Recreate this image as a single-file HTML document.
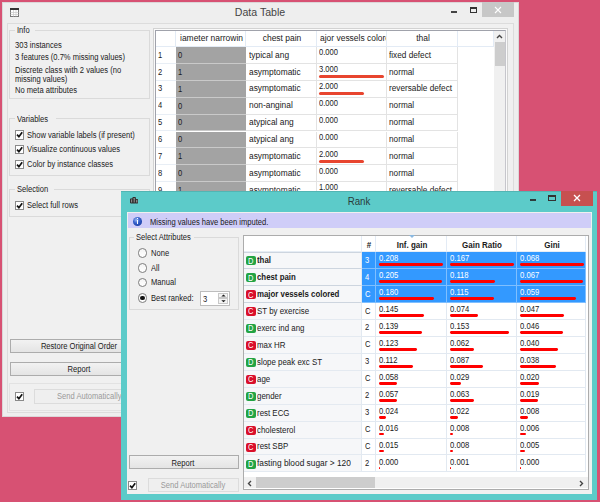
<!DOCTYPE html>
<html><head><meta charset="utf-8"><style>
html,body{margin:0;padding:0;}
body{width:600px;height:502px;overflow:hidden;position:relative;background:#d75173;font-family:"Liberation Sans", sans-serif;font-size:8px;color:#1a1a1a;}
div{position:absolute;box-sizing:border-box;}
.t{white-space:nowrap;}
.gb{border:1px solid #dadada;}
.gl{background:#f0f0f0;height:6px;}
.btn{border:1px solid #acacac;background:linear-gradient(#f2f2f2,#e4e4e4);}
.cb{width:9.2px;height:9.4px;border:1px solid #8a8a8a;background:#fff;}
.cb svg{position:absolute;left:0;top:0;}
.rad{width:9.5px;height:9.5px;border:1px solid #7d7d7d;border-radius:50%;background:linear-gradient(#f4f4f4,#fff);}
.ic{width:9.5px;height:9px;border-radius:2px;}
.D{background:#23a344;}
.C{background:#d9102b;}
</style></head><body>

<div style="left:2px;top:2px;width:517px;height:415px;background:#eeeeee;border:1px solid #dcd6d8;"></div>
<svg style="position:absolute;left:10px;top:8px" width="9" height="9" viewBox="0 0 9 9"><rect x="0.5" y="0.5" width="8" height="8" fill="#fff" stroke="#777" stroke-width="1"/><rect x="0" y="0" width="9" height="2" fill="#333"/><path d="M3.5 2 V8.5 M6 2 V8.5 M0.5 4.5 H8.5 M0.5 6.5 H8.5" stroke="#c8c8c8" stroke-width="0.7"/></svg>
<div class="t" style="left:110.30px;width:300px;text-align:center;top:7.64px;font-size:10.4px;line-height:10.4px;font-weight:normal;color:#444;transform:scaleX(1.0200);transform-origin:50% 0;">Data Table</div>
<div style="left:451px;top:11.3px;width:6px;height:1.6px;background:#444;"></div>
<div style="left:470px;top:7px;width:7px;height:6px;border:1px solid #333;border-top-width:2px;"></div>
<div style="left:482px;top:2px;width:32px;height:15px;background:#c7c7c7;"></div>
<svg style="position:absolute;left:494px;top:6px" width="8" height="8" viewBox="0 0 8 8"><path d="M1 1 L7 7 M7 1 L1 7" stroke="#fff" stroke-width="1.1"/></svg>
<div style="left:7px;top:23px;width:507px;height:390px;background:#f0f0f0;border:1px solid #dcdcdc;"></div>
<div class="gb" style="left:9px;top:29.6px;width:141px;height:69.4px;"></div>
<div class="gl" style="left:15px;top:27.6px;width:20px;"></div>
<div class="t" style="left:17.00px;top:26.34px;font-size:8.9px;line-height:8.9px;font-weight:normal;color:#1a1a1a;transform:scaleX(0.8539);transform-origin:0 0;">Info</div>
<div class="t" style="left:14.80px;top:41.34px;font-size:8.9px;line-height:8.9px;font-weight:normal;color:#1a1a1a;transform:scaleX(0.8539);transform-origin:0 0;">303 instances</div>
<div class="t" style="left:14.80px;top:52.84px;font-size:8.9px;line-height:8.9px;font-weight:normal;color:#1a1a1a;transform:scaleX(0.8539);transform-origin:0 0;">3 features (0.7% missing values)</div>
<div class="t" style="left:14.80px;top:65.84px;font-size:8.9px;line-height:8.9px;font-weight:normal;color:#1a1a1a;transform:scaleX(0.8539);transform-origin:0 0;">Discrete class with 2 values (no</div>
<div class="t" style="left:14.80px;top:74.74px;font-size:8.9px;line-height:8.9px;font-weight:normal;color:#1a1a1a;transform:scaleX(0.8539);transform-origin:0 0;">missing values)</div>
<div class="t" style="left:14.80px;top:86.44px;font-size:8.9px;line-height:8.9px;font-weight:normal;color:#1a1a1a;transform:scaleX(0.8539);transform-origin:0 0;">No meta attributes</div>
<div class="gb" style="left:9px;top:118px;width:141px;height:57.5px;"></div>
<div class="gl" style="left:15px;top:116px;width:41px;"></div>
<div class="t" style="left:17.00px;top:114.84px;font-size:8.9px;line-height:8.9px;font-weight:normal;color:#1a1a1a;transform:scaleX(0.8539);transform-origin:0 0;">Variables</div>
<div class="cb" style="left:15px;top:130.2px;"><svg width="7" height="7" viewBox="0 0 7 7"><path d="M1 3.7 L2.9 5.7 L6.2 1.3" stroke="#111" stroke-width="1.7" fill="none"/></svg></div>
<div class="t" style="left:26.70px;top:130.54px;font-size:8.9px;line-height:8.9px;font-weight:normal;color:#1a1a1a;transform:scaleX(0.8539);transform-origin:0 0;">Show variable labels (if present)</div>
<div class="cb" style="left:15px;top:145.1px;"><svg width="7" height="7" viewBox="0 0 7 7"><path d="M1 3.7 L2.9 5.7 L6.2 1.3" stroke="#111" stroke-width="1.7" fill="none"/></svg></div>
<div class="t" style="left:26.70px;top:145.44px;font-size:8.9px;line-height:8.9px;font-weight:normal;color:#1a1a1a;transform:scaleX(0.8539);transform-origin:0 0;">Visualize continuous values</div>
<div class="cb" style="left:15px;top:160.0px;"><svg width="7" height="7" viewBox="0 0 7 7"><path d="M1 3.7 L2.9 5.7 L6.2 1.3" stroke="#111" stroke-width="1.7" fill="none"/></svg></div>
<div class="t" style="left:26.70px;top:160.34px;font-size:8.9px;line-height:8.9px;font-weight:normal;color:#1a1a1a;transform:scaleX(0.8539);transform-origin:0 0;">Color by instance classes</div>
<div class="gb" style="left:9px;top:189px;width:141px;height:27.5px;"></div>
<div class="gl" style="left:15px;top:187px;width:39px;"></div>
<div class="t" style="left:17.00px;top:185.34px;font-size:8.9px;line-height:8.9px;font-weight:normal;color:#1a1a1a;transform:scaleX(0.8539);transform-origin:0 0;">Selection</div>
<div class="cb" style="left:15px;top:200.5px;"><svg width="7" height="7" viewBox="0 0 7 7"><path d="M1 3.7 L2.9 5.7 L6.2 1.3" stroke="#111" stroke-width="1.7" fill="none"/></svg></div>
<div class="t" style="left:26.70px;top:200.84px;font-size:8.9px;line-height:8.9px;font-weight:normal;color:#1a1a1a;transform:scaleX(0.8539);transform-origin:0 0;">Select full rows</div>
<div class="btn" style="left:10px;top:339px;width:139px;height:14px;"></div>
<div class="t" style="left:-71.30px;width:300px;text-align:center;top:341.84px;font-size:8.9px;line-height:8.9px;font-weight:normal;color:#1a1a1a;transform:scaleX(0.8539);transform-origin:50% 0;">Restore Original Order</div>
<div class="btn" style="left:10px;top:362px;width:139px;height:14px;"></div>
<div class="t" style="left:-71.30px;width:300px;text-align:center;top:364.84px;font-size:8.9px;line-height:8.9px;font-weight:normal;color:#1a1a1a;transform:scaleX(0.8539);transform-origin:50% 0;">Report</div>
<div class="gb" style="left:9px;top:383px;width:141px;height:27.5px;border-color:#e2e2e2;"></div>
<div class="cb" style="left:15px;top:392px;"><svg width="7" height="7" viewBox="0 0 7 7"><path d="M1 3.7 L2.9 5.7 L6.2 1.3" stroke="#111" stroke-width="1.7" fill="none"/></svg></div>
<div style="left:34px;top:389px;width:114px;height:14.5px;border:1px solid #dcdcdc;background:#efefef;"></div>
<div class="t" style="left:56.60px;top:392.34px;font-size:8.9px;line-height:8.9px;font-weight:normal;color:#9a9a9a;transform:scaleX(0.8539);transform-origin:0 0;">Send Automatically</div>
<div style="left:153px;top:28px;width:355px;height:170px;background:#fafafa;border:1px solid #d2d2d2;"></div>
<div style="left:155px;top:30px;width:351px;height:170px;background:#fff;border:1px solid #a0a2ab;border-right-color:#c6c6cc;"></div>
<div style="left:156px;top:31px;width:20px;height:16px;border-right:1px solid #e3ebf5;border-bottom:1px solid #e3ebf5;overflow:hidden;"></div>
<div style="left:176px;top:31px;width:70px;height:16px;border-right:1px solid #e3ebf5;border-bottom:1px solid #e3ebf5;overflow:hidden;"><div class="t" style="left:3.60px;top:3.44px;font-size:8.9px;line-height:8.9px;font-weight:normal;color:#1a1a1a;transform:scaleX(0.9528);transform-origin:0 0;">iameter narrowin</div></div>
<div style="left:246px;top:31px;width:71px;height:16px;border-right:1px solid #e3ebf5;border-bottom:1px solid #e3ebf5;overflow:hidden;"><div class="t" style="left:-114.50px;width:300px;text-align:center;top:3.44px;font-size:8.9px;line-height:8.9px;font-weight:normal;color:#1a1a1a;transform:scaleX(0.9528);transform-origin:50% 0;">chest pain</div></div>
<div style="left:317px;top:31px;width:70px;height:16px;border-right:1px solid #e3ebf5;border-bottom:1px solid #e3ebf5;overflow:hidden;"><div class="t" style="left:2.80px;top:3.44px;font-size:8.9px;line-height:8.9px;font-weight:normal;color:#1a1a1a;transform:scaleX(0.9528);transform-origin:0 0;">ajor vessels colore</div></div>
<div style="left:387px;top:31px;width:71px;height:16px;border-right:1px solid #e3ebf5;border-bottom:1px solid #e3ebf5;overflow:hidden;"><div class="t" style="left:-114.50px;width:300px;text-align:center;top:3.44px;font-size:8.9px;line-height:8.9px;font-weight:normal;color:#1a1a1a;transform:scaleX(0.9528);transform-origin:50% 0;">thal</div></div>
<div style="left:458px;top:31px;width:36px;height:16px;border-right:1px solid #e3ebf5;border-bottom:1px solid #e3ebf5;overflow:hidden;"></div>
<div style="left:156px;top:47.0px;width:20px;height:16.9px;border-bottom:1px solid #e8eef5;"></div>
<div class="t" style="left:158.40px;top:50.64px;font-size:8.9px;line-height:8.9px;font-weight:normal;color:#1a1a1a;transform:scaleX(0.8539);transform-origin:0 0;">1</div>
<div style="left:176px;top:47.0px;width:70px;height:16.9px;background:#a3a3a3;border-bottom:1px solid #c9c9c9;"></div>
<div class="t" style="left:178.20px;top:50.84px;font-size:8.9px;line-height:8.9px;font-weight:normal;color:#1a1a1a;transform:scaleX(0.8539);transform-origin:0 0;">0</div>
<div style="left:246px;top:47.0px;width:71px;height:16.9px;border-right:1px solid #e3e3e3;border-bottom:1px solid #e3e3e3;"></div>
<div class="t" style="left:248.60px;top:50.64px;font-size:8.9px;line-height:8.9px;font-weight:normal;color:#1a1a1a;transform:scaleX(0.9438);transform-origin:0 0;">typical ang</div>
<div style="left:317px;top:47.0px;width:70px;height:16.9px;border-right:1px solid #e3e3e3;border-bottom:1px solid #e3e3e3;"></div>
<div class="t" style="left:319.00px;top:48.24px;font-size:8.9px;line-height:8.9px;font-weight:normal;color:#1a1a1a;transform:scaleX(0.8539);transform-origin:0 0;">0.000</div>
<div style="left:387px;top:47.0px;width:71px;height:16.9px;border-right:1px solid #e3e3e3;border-bottom:1px solid #e3e3e3;"></div>
<div class="t" style="left:389.40px;top:50.64px;font-size:8.9px;line-height:8.9px;font-weight:normal;color:#1a1a1a;transform:scaleX(0.9258);transform-origin:0 0;">fixed defect</div>
<div style="left:156px;top:63.9px;width:20px;height:16.9px;border-bottom:1px solid #e8eef5;"></div>
<div class="t" style="left:158.40px;top:67.54px;font-size:8.9px;line-height:8.9px;font-weight:normal;color:#1a1a1a;transform:scaleX(0.8539);transform-origin:0 0;">2</div>
<div style="left:176px;top:63.9px;width:70px;height:16.9px;background:#a3a3a3;border-bottom:1px solid #c9c9c9;"></div>
<div class="t" style="left:178.20px;top:67.74px;font-size:8.9px;line-height:8.9px;font-weight:normal;color:#1a1a1a;transform:scaleX(0.8539);transform-origin:0 0;">1</div>
<div style="left:246px;top:63.9px;width:71px;height:16.9px;border-right:1px solid #e3e3e3;border-bottom:1px solid #e3e3e3;"></div>
<div class="t" style="left:248.60px;top:67.54px;font-size:8.9px;line-height:8.9px;font-weight:normal;color:#1a1a1a;transform:scaleX(0.9438);transform-origin:0 0;">asymptomatic</div>
<div style="left:317px;top:63.9px;width:70px;height:16.9px;border-right:1px solid #e3e3e3;border-bottom:1px solid #e3e3e3;"></div>
<div class="t" style="left:319.00px;top:65.14px;font-size:8.9px;line-height:8.9px;font-weight:normal;color:#1a1a1a;transform:scaleX(0.8539);transform-origin:0 0;">3.000</div>
<div style="left:319px;top:75.0px;width:65.30000000000001px;height:3px;border-radius:1.5px;background:#e8452f;"></div>
<div style="left:387px;top:63.9px;width:71px;height:16.9px;border-right:1px solid #e3e3e3;border-bottom:1px solid #e3e3e3;"></div>
<div class="t" style="left:389.40px;top:67.54px;font-size:8.9px;line-height:8.9px;font-weight:normal;color:#1a1a1a;transform:scaleX(0.9258);transform-origin:0 0;">normal</div>
<div style="left:156px;top:80.8px;width:20px;height:16.9px;border-bottom:1px solid #e8eef5;"></div>
<div class="t" style="left:158.40px;top:84.44px;font-size:8.9px;line-height:8.9px;font-weight:normal;color:#1a1a1a;transform:scaleX(0.8539);transform-origin:0 0;">3</div>
<div style="left:176px;top:80.8px;width:70px;height:16.9px;background:#a3a3a3;border-bottom:1px solid #c9c9c9;"></div>
<div class="t" style="left:178.20px;top:84.64px;font-size:8.9px;line-height:8.9px;font-weight:normal;color:#1a1a1a;transform:scaleX(0.8539);transform-origin:0 0;">1</div>
<div style="left:246px;top:80.8px;width:71px;height:16.9px;border-right:1px solid #e3e3e3;border-bottom:1px solid #e3e3e3;"></div>
<div class="t" style="left:248.60px;top:84.44px;font-size:8.9px;line-height:8.9px;font-weight:normal;color:#1a1a1a;transform:scaleX(0.9438);transform-origin:0 0;">asymptomatic</div>
<div style="left:317px;top:80.8px;width:70px;height:16.9px;border-right:1px solid #e3e3e3;border-bottom:1px solid #e3e3e3;"></div>
<div class="t" style="left:319.00px;top:82.04px;font-size:8.9px;line-height:8.9px;font-weight:normal;color:#1a1a1a;transform:scaleX(0.8539);transform-origin:0 0;">2.000</div>
<div style="left:319px;top:91.89999999999999px;width:44.7px;height:3px;border-radius:1.5px;background:#e8452f;"></div>
<div style="left:387px;top:80.8px;width:71px;height:16.9px;border-right:1px solid #e3e3e3;border-bottom:1px solid #e3e3e3;"></div>
<div class="t" style="left:389.40px;top:84.44px;font-size:8.9px;line-height:8.9px;font-weight:normal;color:#1a1a1a;transform:scaleX(0.9258);transform-origin:0 0;">reversable defect</div>
<div style="left:156px;top:97.69999999999999px;width:20px;height:16.9px;border-bottom:1px solid #e8eef5;"></div>
<div class="t" style="left:158.40px;top:101.34px;font-size:8.9px;line-height:8.9px;font-weight:normal;color:#1a1a1a;transform:scaleX(0.8539);transform-origin:0 0;">4</div>
<div style="left:176px;top:97.69999999999999px;width:70px;height:16.9px;background:#a3a3a3;border-bottom:1px solid #c9c9c9;"></div>
<div class="t" style="left:178.20px;top:101.54px;font-size:8.9px;line-height:8.9px;font-weight:normal;color:#1a1a1a;transform:scaleX(0.8539);transform-origin:0 0;">0</div>
<div style="left:246px;top:97.69999999999999px;width:71px;height:16.9px;border-right:1px solid #e3e3e3;border-bottom:1px solid #e3e3e3;"></div>
<div class="t" style="left:248.60px;top:101.34px;font-size:8.9px;line-height:8.9px;font-weight:normal;color:#1a1a1a;transform:scaleX(0.9438);transform-origin:0 0;">non-anginal</div>
<div style="left:317px;top:97.69999999999999px;width:70px;height:16.9px;border-right:1px solid #e3e3e3;border-bottom:1px solid #e3e3e3;"></div>
<div class="t" style="left:319.00px;top:98.94px;font-size:8.9px;line-height:8.9px;font-weight:normal;color:#1a1a1a;transform:scaleX(0.8539);transform-origin:0 0;">0.000</div>
<div style="left:387px;top:97.69999999999999px;width:71px;height:16.9px;border-right:1px solid #e3e3e3;border-bottom:1px solid #e3e3e3;"></div>
<div class="t" style="left:389.40px;top:101.34px;font-size:8.9px;line-height:8.9px;font-weight:normal;color:#1a1a1a;transform:scaleX(0.9258);transform-origin:0 0;">normal</div>
<div style="left:156px;top:114.6px;width:20px;height:16.9px;border-bottom:1px solid #e8eef5;"></div>
<div class="t" style="left:158.40px;top:118.24px;font-size:8.9px;line-height:8.9px;font-weight:normal;color:#1a1a1a;transform:scaleX(0.8539);transform-origin:0 0;">5</div>
<div style="left:176px;top:114.6px;width:70px;height:16.9px;background:#a3a3a3;border-bottom:1px solid #c9c9c9;"></div>
<div class="t" style="left:178.20px;top:118.44px;font-size:8.9px;line-height:8.9px;font-weight:normal;color:#1a1a1a;transform:scaleX(0.8539);transform-origin:0 0;">0</div>
<div style="left:246px;top:114.6px;width:71px;height:16.9px;border-right:1px solid #e3e3e3;border-bottom:1px solid #e3e3e3;"></div>
<div class="t" style="left:248.60px;top:118.24px;font-size:8.9px;line-height:8.9px;font-weight:normal;color:#1a1a1a;transform:scaleX(0.9438);transform-origin:0 0;">atypical ang</div>
<div style="left:317px;top:114.6px;width:70px;height:16.9px;border-right:1px solid #e3e3e3;border-bottom:1px solid #e3e3e3;"></div>
<div class="t" style="left:319.00px;top:115.84px;font-size:8.9px;line-height:8.9px;font-weight:normal;color:#1a1a1a;transform:scaleX(0.8539);transform-origin:0 0;">0.000</div>
<div style="left:387px;top:114.6px;width:71px;height:16.9px;border-right:1px solid #e3e3e3;border-bottom:1px solid #e3e3e3;"></div>
<div class="t" style="left:389.40px;top:118.24px;font-size:8.9px;line-height:8.9px;font-weight:normal;color:#1a1a1a;transform:scaleX(0.9258);transform-origin:0 0;">normal</div>
<div style="left:156px;top:131.5px;width:20px;height:16.9px;border-bottom:1px solid #e8eef5;"></div>
<div class="t" style="left:158.40px;top:135.14px;font-size:8.9px;line-height:8.9px;font-weight:normal;color:#1a1a1a;transform:scaleX(0.8539);transform-origin:0 0;">6</div>
<div style="left:176px;top:131.5px;width:70px;height:16.9px;background:#a3a3a3;border-bottom:1px solid #c9c9c9;"></div>
<div class="t" style="left:178.20px;top:135.34px;font-size:8.9px;line-height:8.9px;font-weight:normal;color:#1a1a1a;transform:scaleX(0.8539);transform-origin:0 0;">0</div>
<div style="left:246px;top:131.5px;width:71px;height:16.9px;border-right:1px solid #e3e3e3;border-bottom:1px solid #e3e3e3;"></div>
<div class="t" style="left:248.60px;top:135.14px;font-size:8.9px;line-height:8.9px;font-weight:normal;color:#1a1a1a;transform:scaleX(0.9438);transform-origin:0 0;">atypical ang</div>
<div style="left:317px;top:131.5px;width:70px;height:16.9px;border-right:1px solid #e3e3e3;border-bottom:1px solid #e3e3e3;"></div>
<div class="t" style="left:319.00px;top:132.74px;font-size:8.9px;line-height:8.9px;font-weight:normal;color:#1a1a1a;transform:scaleX(0.8539);transform-origin:0 0;">0.000</div>
<div style="left:387px;top:131.5px;width:71px;height:16.9px;border-right:1px solid #e3e3e3;border-bottom:1px solid #e3e3e3;"></div>
<div class="t" style="left:389.40px;top:135.14px;font-size:8.9px;line-height:8.9px;font-weight:normal;color:#1a1a1a;transform:scaleX(0.9258);transform-origin:0 0;">normal</div>
<div style="left:156px;top:148.39999999999998px;width:20px;height:16.9px;border-bottom:1px solid #e8eef5;"></div>
<div class="t" style="left:158.40px;top:152.04px;font-size:8.9px;line-height:8.9px;font-weight:normal;color:#1a1a1a;transform:scaleX(0.8539);transform-origin:0 0;">7</div>
<div style="left:176px;top:148.39999999999998px;width:70px;height:16.9px;background:#a3a3a3;border-bottom:1px solid #c9c9c9;"></div>
<div class="t" style="left:178.20px;top:152.24px;font-size:8.9px;line-height:8.9px;font-weight:normal;color:#1a1a1a;transform:scaleX(0.8539);transform-origin:0 0;">1</div>
<div style="left:246px;top:148.39999999999998px;width:71px;height:16.9px;border-right:1px solid #e3e3e3;border-bottom:1px solid #e3e3e3;"></div>
<div class="t" style="left:248.60px;top:152.04px;font-size:8.9px;line-height:8.9px;font-weight:normal;color:#1a1a1a;transform:scaleX(0.9438);transform-origin:0 0;">asymptomatic</div>
<div style="left:317px;top:148.39999999999998px;width:70px;height:16.9px;border-right:1px solid #e3e3e3;border-bottom:1px solid #e3e3e3;"></div>
<div class="t" style="left:319.00px;top:149.64px;font-size:8.9px;line-height:8.9px;font-weight:normal;color:#1a1a1a;transform:scaleX(0.8539);transform-origin:0 0;">2.000</div>
<div style="left:319px;top:159.49999999999997px;width:44.7px;height:3px;border-radius:1.5px;background:#e8452f;"></div>
<div style="left:387px;top:148.39999999999998px;width:71px;height:16.9px;border-right:1px solid #e3e3e3;border-bottom:1px solid #e3e3e3;"></div>
<div class="t" style="left:389.40px;top:152.04px;font-size:8.9px;line-height:8.9px;font-weight:normal;color:#1a1a1a;transform:scaleX(0.9258);transform-origin:0 0;">normal</div>
<div style="left:156px;top:165.29999999999998px;width:20px;height:16.9px;border-bottom:1px solid #e8eef5;"></div>
<div class="t" style="left:158.40px;top:168.94px;font-size:8.9px;line-height:8.9px;font-weight:normal;color:#1a1a1a;transform:scaleX(0.8539);transform-origin:0 0;">8</div>
<div style="left:176px;top:165.29999999999998px;width:70px;height:16.9px;background:#a3a3a3;border-bottom:1px solid #c9c9c9;"></div>
<div class="t" style="left:178.20px;top:169.14px;font-size:8.9px;line-height:8.9px;font-weight:normal;color:#1a1a1a;transform:scaleX(0.8539);transform-origin:0 0;">0</div>
<div style="left:246px;top:165.29999999999998px;width:71px;height:16.9px;border-right:1px solid #e3e3e3;border-bottom:1px solid #e3e3e3;"></div>
<div class="t" style="left:248.60px;top:168.94px;font-size:8.9px;line-height:8.9px;font-weight:normal;color:#1a1a1a;transform:scaleX(0.9438);transform-origin:0 0;">asymptomatic</div>
<div style="left:317px;top:165.29999999999998px;width:70px;height:16.9px;border-right:1px solid #e3e3e3;border-bottom:1px solid #e3e3e3;"></div>
<div class="t" style="left:319.00px;top:166.54px;font-size:8.9px;line-height:8.9px;font-weight:normal;color:#1a1a1a;transform:scaleX(0.8539);transform-origin:0 0;">0.000</div>
<div style="left:387px;top:165.29999999999998px;width:71px;height:16.9px;border-right:1px solid #e3e3e3;border-bottom:1px solid #e3e3e3;"></div>
<div class="t" style="left:389.40px;top:168.94px;font-size:8.9px;line-height:8.9px;font-weight:normal;color:#1a1a1a;transform:scaleX(0.9258);transform-origin:0 0;">normal</div>
<div style="left:156px;top:182.2px;width:20px;height:16.9px;border-bottom:1px solid #e8eef5;"></div>
<div class="t" style="left:158.40px;top:185.84px;font-size:8.9px;line-height:8.9px;font-weight:normal;color:#1a1a1a;transform:scaleX(0.8539);transform-origin:0 0;">9</div>
<div style="left:176px;top:182.2px;width:70px;height:16.9px;background:#a3a3a3;border-bottom:1px solid #c9c9c9;"></div>
<div class="t" style="left:178.20px;top:186.04px;font-size:8.9px;line-height:8.9px;font-weight:normal;color:#1a1a1a;transform:scaleX(0.8539);transform-origin:0 0;">1</div>
<div style="left:246px;top:182.2px;width:71px;height:16.9px;border-right:1px solid #e3e3e3;border-bottom:1px solid #e3e3e3;"></div>
<div class="t" style="left:248.60px;top:185.84px;font-size:8.9px;line-height:8.9px;font-weight:normal;color:#1a1a1a;transform:scaleX(0.9438);transform-origin:0 0;">asymptomatic</div>
<div style="left:317px;top:182.2px;width:70px;height:16.9px;border-right:1px solid #e3e3e3;border-bottom:1px solid #e3e3e3;"></div>
<div class="t" style="left:319.00px;top:183.44px;font-size:8.9px;line-height:8.9px;font-weight:normal;color:#1a1a1a;transform:scaleX(0.8539);transform-origin:0 0;">1.000</div>
<div style="left:319px;top:193.29999999999998px;width:24.1px;height:3px;border-radius:1.5px;background:#e8452f;"></div>
<div style="left:387px;top:182.2px;width:71px;height:16.9px;border-right:1px solid #e3e3e3;border-bottom:1px solid #e3e3e3;"></div>
<div class="t" style="left:389.40px;top:185.84px;font-size:8.9px;line-height:8.9px;font-weight:normal;color:#1a1a1a;transform:scaleX(0.9258);transform-origin:0 0;">reversable defect</div>
<div style="left:494px;top:31px;width:11px;height:168px;background:#f0f0f0;"></div>
<svg style="position:absolute;left:496px;top:34px" width="7" height="5" viewBox="0 0 7 5"><path d="M1 4 L3.5 1.5 L6 4" stroke="#444" stroke-width="1.4" fill="none"/></svg>
<div style="left:494.5px;top:42.3px;width:10.5px;height:23.7px;background:#cdcdcd;"></div>
<div style="left:121px;top:190.5px;width:476.3px;height:309px;background:#5ccbc9;border-top:1px solid #52b5b3;"></div>
<svg style="position:absolute;left:129.8px;top:197.4px" width="8.4" height="6.4" viewBox="0 0 8.4 6.4"><path d="M0.5 1.9 H2.9 V6 H0.5 Z M2.9 0.5 H5.4 V6 H2.9 Z M5.4 2.6 H7.9 V6 H5.4 Z" fill="#8a8a8a" stroke="#2e2e2e" stroke-width="1"/></svg>
<div class="t" style="left:209.30px;width:300px;text-align:center;top:195.62px;font-size:10.6px;line-height:10.6px;font-weight:normal;color:#2b3b3b;transform:scaleX(0.9150);transform-origin:50% 0;">Rank</div>
<div style="left:530px;top:199px;width:6px;height:1.6px;background:#2d3d3d;"></div>
<div style="left:548px;top:195px;width:8px;height:6px;border:1px solid #333;border-top-width:2px;"></div>
<div style="left:561px;top:191px;width:32px;height:14.5px;background:#c75050;"></div>
<svg style="position:absolute;left:573px;top:194px" width="8" height="8" viewBox="0 0 8 8"><path d="M1 1 L7 7 M7 1 L1 7" stroke="#fff" stroke-width="1.3"/></svg>
<div style="left:126.5px;top:211.8px;width:465.5px;height:282.2px;background:#f0f0f0;"></div>
<div style="left:127.5px;top:212.5px;width:463.5px;height:15px;background:#cfcdf8;"></div>
<div style="left:132.8px;top:217px;width:9px;height:8.5px;border-radius:50%;background:radial-gradient(circle at 38% 32%,#9ab8f2 0%,#3560cc 40%,#10308f 100%);"></div>
<div style="left:136.8px;top:219.5px;width:1.2px;height:4px;background:#fff;"></div><div style="left:136.8px;top:218px;width:1.2px;height:1px;background:#fff;"></div>
<div class="t" style="left:150.30px;top:217.84px;font-size:8.9px;line-height:8.9px;font-weight:normal;color:#1a1a1a;transform:scaleX(0.8539);transform-origin:0 0;">Missing values have been imputed.</div>
<div class="gb" style="left:128.5px;top:237px;width:110.5px;height:73px;"></div>
<div class="gl" style="left:134px;top:235px;width:60px;"></div>
<div class="t" style="left:136.20px;top:233.34px;font-size:8.9px;line-height:8.9px;font-weight:normal;color:#1a1a1a;transform:scaleX(0.8539);transform-origin:0 0;">Select Attributes</div>
<div class="rad" style="left:137.5px;top:248.45px;"></div>
<div class="t" style="left:150.90px;top:249.04px;font-size:8.9px;line-height:8.9px;font-weight:normal;color:#1a1a1a;transform:scaleX(0.8539);transform-origin:0 0;">None</div>
<div class="rad" style="left:137.5px;top:263.25px;"></div>
<div class="t" style="left:150.90px;top:263.84px;font-size:8.9px;line-height:8.9px;font-weight:normal;color:#1a1a1a;transform:scaleX(0.8539);transform-origin:0 0;">All</div>
<div class="rad" style="left:137.5px;top:277.65px;"></div>
<div class="t" style="left:150.90px;top:278.24px;font-size:8.9px;line-height:8.9px;font-weight:normal;color:#1a1a1a;transform:scaleX(0.8539);transform-origin:0 0;">Manual</div>
<div class="rad" style="left:137.5px;top:293.45px;"></div>
<div class="t" style="left:150.90px;top:294.04px;font-size:8.9px;line-height:8.9px;font-weight:normal;color:#1a1a1a;transform:scaleX(0.8539);transform-origin:0 0;">Best ranked:</div>
<div style="left:140.2px;top:296px;width:4.4px;height:4.4px;border-radius:50%;background:#111;"></div>
<div style="left:200px;top:291px;width:29.5px;height:14.6px;background:#fff;border:1px solid #bdbdbd;"></div>
<div class="t" style="left:202.80px;top:295.24px;font-size:8.9px;line-height:8.9px;font-weight:normal;color:#1a1a1a;transform:scaleX(0.8539);transform-origin:0 0;">3</div>
<div style="left:218.3px;top:293px;width:9.6px;height:5.3px;background:#f4f4f4;border:1px solid #c8c8c8;"></div>
<div style="left:218.3px;top:298.3px;width:9.6px;height:5.4px;background:#f4f4f4;border:1px solid #c8c8c8;"></div>
<svg style="position:absolute;left:220px;top:293px" width="7" height="11" viewBox="0 0 7 11"><path d="M1.3 3.6 L3.5 1.6 L5.7 3.6 Z M1.3 7.2 L3.5 9.2 L5.7 7.2 Z" fill="#1a1a1a"/></svg>
<div class="btn" style="left:129px;top:455.2px;width:109.7px;height:14.1px;"></div>
<div class="t" style="left:33.10px;width:300px;text-align:center;top:458.64px;font-size:8.9px;line-height:8.9px;font-weight:normal;color:#1a1a1a;transform:scaleX(0.8539);transform-origin:50% 0;">Report</div>
<div class="cb" style="left:128.2px;top:480.7px;"><svg width="7" height="7" viewBox="0 0 7 7"><path d="M1 3.7 L2.9 5.7 L6.2 1.3" stroke="#111" stroke-width="1.7" fill="none"/></svg></div>
<div style="left:148.2px;top:477.5px;width:90.5px;height:14.1px;border:1px solid #dcdcdc;background:#efefef;"></div>
<div class="t" style="left:43.00px;width:300px;text-align:center;top:480.84px;font-size:8.9px;line-height:8.9px;font-weight:normal;color:#9a9a9a;transform:scaleX(0.8539);transform-origin:50% 0;">Send Automatically</div>
<div style="left:243px;top:235px;width:346px;height:255px;background:#fff;border:1px solid #acacac;"></div>
<div style="left:244px;top:236px;width:118px;height:16.3px;border-right:1px solid #e3ebf5;border-bottom:1px solid #e6edf5;"></div>
<div style="left:362px;top:236px;width:14px;height:16.3px;border-right:1px solid #e3ebf5;border-bottom:1px solid #e6edf5;"></div>
<div class="t" style="left:219.00px;width:300px;text-align:center;top:240.54px;font-size:8.9px;line-height:8.9px;font-weight:bold;color:#1a1a1a;transform:scaleX(0.8989);transform-origin:50% 0;">#</div>
<div style="left:376px;top:236px;width:71px;height:16.3px;border-right:1px solid #e3ebf5;border-bottom:1px solid #e6edf5;"></div>
<div class="t" style="left:261.50px;width:300px;text-align:center;top:240.54px;font-size:8.9px;line-height:8.9px;font-weight:bold;color:#1a1a1a;transform:scaleX(0.8989);transform-origin:50% 0;">Inf. gain</div>
<div style="left:447px;top:236px;width:70px;height:16.3px;border-right:1px solid #e3ebf5;border-bottom:1px solid #e6edf5;"></div>
<div class="t" style="left:332.00px;width:300px;text-align:center;top:240.54px;font-size:8.9px;line-height:8.9px;font-weight:bold;color:#1a1a1a;transform:scaleX(0.8989);transform-origin:50% 0;">Gain Ratio</div>
<div style="left:517px;top:236px;width:69px;height:16.3px;border-right:1px solid #e3ebf5;border-bottom:1px solid #e6edf5;"></div>
<div class="t" style="left:401.50px;width:300px;text-align:center;top:240.54px;font-size:8.9px;line-height:8.9px;font-weight:bold;color:#1a1a1a;transform:scaleX(0.8989);transform-origin:50% 0;">Gini</div>
<svg style="position:absolute;left:408.5px;top:235px" width="6" height="4" viewBox="0 0 6 4"><path d="M0 0 L6 0 L3 3 Z" fill="#8ab8e0"/></svg>
<div style="left:244px;top:252.3px;width:118px;height:16.93px;background:#f6f7f9;border-bottom:1px solid #cdd5df;border-right:1px solid #e2e9f1;border-top:1px solid #cdd5df;"></div>
<div class="ic D" style="left:246.2px;top:256.40000000000003px;"><div class="t" style="left:1.7px;top:0.3px;font-size:8.8px;line-height:8.8px;color:#fff;transform:scaleX(0.85);transform-origin:0 0;">D</div></div>
<div class="t" style="left:257.30px;top:256.24px;font-size:8.9px;line-height:8.9px;font-weight:bold;color:#1a1a1a;transform:scaleX(0.8836);transform-origin:0 0;">thal</div>
<div style="left:362px;top:252.3px;width:14px;height:16.93px;background:#3399ff;border-bottom:1px solid #7fbfff;border-right:1px solid #7fbfff;"></div>
<div class="t" style="left:364.70px;top:255.74px;font-size:8.9px;line-height:8.9px;font-weight:normal;color:#fff;transform:scaleX(0.8539);transform-origin:0 0;">3</div>
<div style="left:376px;top:252.3px;width:71px;height:16.93px;background:#3399ff;border-bottom:1px solid #7fbfff;border-right:1px solid #7fbfff;"></div>
<div class="t" style="left:379.00px;top:254.44px;font-size:8.9px;line-height:8.9px;font-weight:normal;color:#fff;transform:scaleX(0.8629);transform-origin:0 0;">0.208</div>
<div style="left:379px;top:263.40000000000003px;width:64.0px;height:2.8px;border-radius:1.4px;background:#f00;"></div>
<div style="left:447px;top:252.3px;width:70px;height:16.93px;background:#3399ff;border-bottom:1px solid #7fbfff;border-right:1px solid #7fbfff;"></div>
<div class="t" style="left:450.00px;top:254.44px;font-size:8.9px;line-height:8.9px;font-weight:normal;color:#fff;transform:scaleX(0.8629);transform-origin:0 0;">0.167</div>
<div style="left:450px;top:263.40000000000003px;width:64.0px;height:2.8px;border-radius:1.4px;background:#f00;"></div>
<div style="left:517px;top:252.3px;width:69px;height:16.93px;background:#3399ff;border-bottom:1px solid #7fbfff;border-right:1px solid #7fbfff;"></div>
<div class="t" style="left:520.00px;top:254.44px;font-size:8.9px;line-height:8.9px;font-weight:normal;color:#fff;transform:scaleX(0.8629);transform-origin:0 0;">0.068</div>
<div style="left:520px;top:263.40000000000003px;width:64.0px;height:2.8px;border-radius:1.4px;background:#f00;"></div>
<div style="left:244px;top:269.23px;width:118px;height:16.93px;background:#f6f7f9;border-bottom:1px solid #cdd5df;border-right:1px solid #e2e9f1;"></div>
<div class="ic D" style="left:246.2px;top:273.33000000000004px;"><div class="t" style="left:1.7px;top:0.3px;font-size:8.8px;line-height:8.8px;color:#fff;transform:scaleX(0.85);transform-origin:0 0;">D</div></div>
<div class="t" style="left:257.30px;top:273.17px;font-size:8.9px;line-height:8.9px;font-weight:bold;color:#1a1a1a;transform:scaleX(0.8836);transform-origin:0 0;">chest pain</div>
<div style="left:362px;top:269.23px;width:14px;height:16.93px;background:#3399ff;border-bottom:1px solid #7fbfff;border-right:1px solid #7fbfff;"></div>
<div class="t" style="left:364.70px;top:272.67px;font-size:8.9px;line-height:8.9px;font-weight:normal;color:#fff;transform:scaleX(0.8539);transform-origin:0 0;">4</div>
<div style="left:376px;top:269.23px;width:71px;height:16.93px;background:#3399ff;border-bottom:1px solid #7fbfff;border-right:1px solid #7fbfff;"></div>
<div class="t" style="left:379.00px;top:271.37px;font-size:8.9px;line-height:8.9px;font-weight:normal;color:#fff;transform:scaleX(0.8629);transform-origin:0 0;">0.205</div>
<div style="left:379px;top:280.33000000000004px;width:63.07692307692307px;height:2.8px;border-radius:1.4px;background:#f00;"></div>
<div style="left:447px;top:269.23px;width:70px;height:16.93px;background:#3399ff;border-bottom:1px solid #7fbfff;border-right:1px solid #7fbfff;"></div>
<div class="t" style="left:450.00px;top:271.37px;font-size:8.9px;line-height:8.9px;font-weight:normal;color:#fff;transform:scaleX(0.8629);transform-origin:0 0;">0.118</div>
<div style="left:450px;top:280.33000000000004px;width:45.22155688622754px;height:2.8px;border-radius:1.4px;background:#f00;"></div>
<div style="left:517px;top:269.23px;width:69px;height:16.93px;background:#3399ff;border-bottom:1px solid #7fbfff;border-right:1px solid #7fbfff;"></div>
<div class="t" style="left:520.00px;top:271.37px;font-size:8.9px;line-height:8.9px;font-weight:normal;color:#fff;transform:scaleX(0.8629);transform-origin:0 0;">0.067</div>
<div style="left:520px;top:280.33000000000004px;width:63.05882352941176px;height:2.8px;border-radius:1.4px;background:#f00;"></div>
<div style="left:244px;top:286.16px;width:118px;height:16.93px;background:#f6f7f9;border-bottom:1px solid #cdd5df;border-right:1px solid #e2e9f1;"></div>
<div class="ic C" style="left:246.2px;top:290.26000000000005px;"><div class="t" style="left:1.7px;top:0.3px;font-size:8.8px;line-height:8.8px;color:#fff;transform:scaleX(0.85);transform-origin:0 0;">C</div></div>
<div class="t" style="left:257.30px;top:290.10px;font-size:8.9px;line-height:8.9px;font-weight:bold;color:#1a1a1a;transform:scaleX(0.8836);transform-origin:0 0;">major vessels colored</div>
<div style="left:362px;top:286.16px;width:14px;height:16.93px;background:#3399ff;border-bottom:1px solid #7fbfff;border-right:1px solid #7fbfff;"></div>
<div class="t" style="left:364.70px;top:289.60px;font-size:8.9px;line-height:8.9px;font-weight:normal;color:#fff;transform:scaleX(0.8539);transform-origin:0 0;">C</div>
<div style="left:376px;top:286.16px;width:71px;height:16.93px;background:#3399ff;border-bottom:1px solid #7fbfff;border-right:1px solid #7fbfff;"></div>
<div class="t" style="left:379.00px;top:288.30px;font-size:8.9px;line-height:8.9px;font-weight:normal;color:#fff;transform:scaleX(0.8629);transform-origin:0 0;">0.180</div>
<div style="left:379px;top:297.26000000000005px;width:55.38461538461539px;height:2.8px;border-radius:1.4px;background:#f00;"></div>
<div style="left:447px;top:286.16px;width:70px;height:16.93px;background:#3399ff;border-bottom:1px solid #7fbfff;border-right:1px solid #7fbfff;"></div>
<div class="t" style="left:450.00px;top:288.30px;font-size:8.9px;line-height:8.9px;font-weight:normal;color:#fff;transform:scaleX(0.8629);transform-origin:0 0;">0.115</div>
<div style="left:450px;top:297.26000000000005px;width:44.07185628742515px;height:2.8px;border-radius:1.4px;background:#f00;"></div>
<div style="left:517px;top:286.16px;width:69px;height:16.93px;background:#3399ff;border-bottom:1px solid #7fbfff;border-right:1px solid #7fbfff;"></div>
<div class="t" style="left:520.00px;top:288.30px;font-size:8.9px;line-height:8.9px;font-weight:normal;color:#fff;transform:scaleX(0.8629);transform-origin:0 0;">0.059</div>
<div style="left:520px;top:297.26000000000005px;width:55.52941176470588px;height:2.8px;border-radius:1.4px;background:#f00;"></div>
<div style="left:244px;top:303.09000000000003px;width:118px;height:16.93px;background:#f6f7f9;border-bottom:1px solid #e4eaf1;border-right:1px solid #e2e9f1;"></div>
<div class="ic C" style="left:246.2px;top:307.19000000000005px;"><div class="t" style="left:1.7px;top:0.3px;font-size:8.8px;line-height:8.8px;color:#fff;transform:scaleX(0.85);transform-origin:0 0;">C</div></div>
<div class="t" style="left:257.30px;top:307.03px;font-size:8.9px;line-height:8.9px;font-weight:normal;color:#1a1a1a;transform:scaleX(0.8899);transform-origin:0 0;">ST by exercise</div>
<div style="left:362px;top:303.09000000000003px;width:14px;height:16.93px;background:#fff;border-bottom:1px solid #e2e9f1;border-right:1px solid #e2e9f1;"></div>
<div class="t" style="left:364.70px;top:306.53px;font-size:8.9px;line-height:8.9px;font-weight:normal;color:#1a1a1a;transform:scaleX(0.8539);transform-origin:0 0;">C</div>
<div style="left:376px;top:303.09000000000003px;width:71px;height:16.93px;background:#fff;border-bottom:1px solid #e2e9f1;border-right:1px solid #e2e9f1;"></div>
<div class="t" style="left:379.00px;top:305.23px;font-size:8.9px;line-height:8.9px;font-weight:normal;color:#1a1a1a;transform:scaleX(0.8629);transform-origin:0 0;">0.145</div>
<div style="left:379px;top:314.19000000000005px;width:44.61538461538461px;height:2.8px;border-radius:1.4px;background:#f00;"></div>
<div style="left:447px;top:303.09000000000003px;width:70px;height:16.93px;background:#fff;border-bottom:1px solid #e2e9f1;border-right:1px solid #e2e9f1;"></div>
<div class="t" style="left:450.00px;top:305.23px;font-size:8.9px;line-height:8.9px;font-weight:normal;color:#1a1a1a;transform:scaleX(0.8629);transform-origin:0 0;">0.074</div>
<div style="left:450px;top:314.19000000000005px;width:28.359281437125745px;height:2.8px;border-radius:1.4px;background:#f00;"></div>
<div style="left:517px;top:303.09000000000003px;width:69px;height:16.93px;background:#fff;border-bottom:1px solid #e2e9f1;border-right:1px solid #e2e9f1;"></div>
<div class="t" style="left:520.00px;top:305.23px;font-size:8.9px;line-height:8.9px;font-weight:normal;color:#1a1a1a;transform:scaleX(0.8629);transform-origin:0 0;">0.047</div>
<div style="left:520px;top:314.19000000000005px;width:44.23529411764706px;height:2.8px;border-radius:1.4px;background:#f00;"></div>
<div style="left:244px;top:320.02px;width:118px;height:16.93px;background:#f6f7f9;border-bottom:1px solid #e4eaf1;border-right:1px solid #e2e9f1;"></div>
<div class="ic D" style="left:246.2px;top:324.12px;"><div class="t" style="left:1.7px;top:0.3px;font-size:8.8px;line-height:8.8px;color:#fff;transform:scaleX(0.85);transform-origin:0 0;">D</div></div>
<div class="t" style="left:257.30px;top:323.96px;font-size:8.9px;line-height:8.9px;font-weight:normal;color:#1a1a1a;transform:scaleX(0.8899);transform-origin:0 0;">exerc ind ang</div>
<div style="left:362px;top:320.02px;width:14px;height:16.93px;background:#fff;border-bottom:1px solid #e2e9f1;border-right:1px solid #e2e9f1;"></div>
<div class="t" style="left:364.70px;top:323.46px;font-size:8.9px;line-height:8.9px;font-weight:normal;color:#1a1a1a;transform:scaleX(0.8539);transform-origin:0 0;">2</div>
<div style="left:376px;top:320.02px;width:71px;height:16.93px;background:#fff;border-bottom:1px solid #e2e9f1;border-right:1px solid #e2e9f1;"></div>
<div class="t" style="left:379.00px;top:322.16px;font-size:8.9px;line-height:8.9px;font-weight:normal;color:#1a1a1a;transform:scaleX(0.8629);transform-origin:0 0;">0.139</div>
<div style="left:379px;top:331.12px;width:42.769230769230774px;height:2.8px;border-radius:1.4px;background:#f00;"></div>
<div style="left:447px;top:320.02px;width:70px;height:16.93px;background:#fff;border-bottom:1px solid #e2e9f1;border-right:1px solid #e2e9f1;"></div>
<div class="t" style="left:450.00px;top:322.16px;font-size:8.9px;line-height:8.9px;font-weight:normal;color:#1a1a1a;transform:scaleX(0.8629);transform-origin:0 0;">0.153</div>
<div style="left:450px;top:331.12px;width:58.63473053892215px;height:2.8px;border-radius:1.4px;background:#f00;"></div>
<div style="left:517px;top:320.02px;width:69px;height:16.93px;background:#fff;border-bottom:1px solid #e2e9f1;border-right:1px solid #e2e9f1;"></div>
<div class="t" style="left:520.00px;top:322.16px;font-size:8.9px;line-height:8.9px;font-weight:normal;color:#1a1a1a;transform:scaleX(0.8629);transform-origin:0 0;">0.046</div>
<div style="left:520px;top:331.12px;width:43.29411764705882px;height:2.8px;border-radius:1.4px;background:#f00;"></div>
<div style="left:244px;top:336.95000000000005px;width:118px;height:16.93px;background:#f6f7f9;border-bottom:1px solid #e4eaf1;border-right:1px solid #e2e9f1;"></div>
<div class="ic C" style="left:246.2px;top:341.05000000000007px;"><div class="t" style="left:1.7px;top:0.3px;font-size:8.8px;line-height:8.8px;color:#fff;transform:scaleX(0.85);transform-origin:0 0;">C</div></div>
<div class="t" style="left:257.30px;top:340.89px;font-size:8.9px;line-height:8.9px;font-weight:normal;color:#1a1a1a;transform:scaleX(0.8899);transform-origin:0 0;">max HR</div>
<div style="left:362px;top:336.95000000000005px;width:14px;height:16.93px;background:#fff;border-bottom:1px solid #e2e9f1;border-right:1px solid #e2e9f1;"></div>
<div class="t" style="left:364.70px;top:340.39px;font-size:8.9px;line-height:8.9px;font-weight:normal;color:#1a1a1a;transform:scaleX(0.8539);transform-origin:0 0;">C</div>
<div style="left:376px;top:336.95000000000005px;width:71px;height:16.93px;background:#fff;border-bottom:1px solid #e2e9f1;border-right:1px solid #e2e9f1;"></div>
<div class="t" style="left:379.00px;top:339.09px;font-size:8.9px;line-height:8.9px;font-weight:normal;color:#1a1a1a;transform:scaleX(0.8629);transform-origin:0 0;">0.123</div>
<div style="left:379px;top:348.05000000000007px;width:37.84615384615385px;height:2.8px;border-radius:1.4px;background:#f00;"></div>
<div style="left:447px;top:336.95000000000005px;width:70px;height:16.93px;background:#fff;border-bottom:1px solid #e2e9f1;border-right:1px solid #e2e9f1;"></div>
<div class="t" style="left:450.00px;top:339.09px;font-size:8.9px;line-height:8.9px;font-weight:normal;color:#1a1a1a;transform:scaleX(0.8629);transform-origin:0 0;">0.062</div>
<div style="left:450px;top:348.05000000000007px;width:23.760479041916167px;height:2.8px;border-radius:1.4px;background:#f00;"></div>
<div style="left:517px;top:336.95000000000005px;width:69px;height:16.93px;background:#fff;border-bottom:1px solid #e2e9f1;border-right:1px solid #e2e9f1;"></div>
<div class="t" style="left:520.00px;top:339.09px;font-size:8.9px;line-height:8.9px;font-weight:normal;color:#1a1a1a;transform:scaleX(0.8629);transform-origin:0 0;">0.040</div>
<div style="left:520px;top:348.05000000000007px;width:37.64705882352941px;height:2.8px;border-radius:1.4px;background:#f00;"></div>
<div style="left:244px;top:353.88px;width:118px;height:16.93px;background:#f6f7f9;border-bottom:1px solid #e4eaf1;border-right:1px solid #e2e9f1;"></div>
<div class="ic D" style="left:246.2px;top:357.98px;"><div class="t" style="left:1.7px;top:0.3px;font-size:8.8px;line-height:8.8px;color:#fff;transform:scaleX(0.85);transform-origin:0 0;">D</div></div>
<div class="t" style="left:257.30px;top:357.82px;font-size:8.9px;line-height:8.9px;font-weight:normal;color:#1a1a1a;transform:scaleX(0.8899);transform-origin:0 0;">slope peak exc ST</div>
<div style="left:362px;top:353.88px;width:14px;height:16.93px;background:#fff;border-bottom:1px solid #e2e9f1;border-right:1px solid #e2e9f1;"></div>
<div class="t" style="left:364.70px;top:357.32px;font-size:8.9px;line-height:8.9px;font-weight:normal;color:#1a1a1a;transform:scaleX(0.8539);transform-origin:0 0;">3</div>
<div style="left:376px;top:353.88px;width:71px;height:16.93px;background:#fff;border-bottom:1px solid #e2e9f1;border-right:1px solid #e2e9f1;"></div>
<div class="t" style="left:379.00px;top:356.02px;font-size:8.9px;line-height:8.9px;font-weight:normal;color:#1a1a1a;transform:scaleX(0.8629);transform-origin:0 0;">0.112</div>
<div style="left:379px;top:364.98px;width:34.46153846153847px;height:2.8px;border-radius:1.4px;background:#f00;"></div>
<div style="left:447px;top:353.88px;width:70px;height:16.93px;background:#fff;border-bottom:1px solid #e2e9f1;border-right:1px solid #e2e9f1;"></div>
<div class="t" style="left:450.00px;top:356.02px;font-size:8.9px;line-height:8.9px;font-weight:normal;color:#1a1a1a;transform:scaleX(0.8629);transform-origin:0 0;">0.087</div>
<div style="left:450px;top:364.98px;width:33.341317365269454px;height:2.8px;border-radius:1.4px;background:#f00;"></div>
<div style="left:517px;top:353.88px;width:69px;height:16.93px;background:#fff;border-bottom:1px solid #e2e9f1;border-right:1px solid #e2e9f1;"></div>
<div class="t" style="left:520.00px;top:356.02px;font-size:8.9px;line-height:8.9px;font-weight:normal;color:#1a1a1a;transform:scaleX(0.8629);transform-origin:0 0;">0.038</div>
<div style="left:520px;top:364.98px;width:35.764705882352935px;height:2.8px;border-radius:1.4px;background:#f00;"></div>
<div style="left:244px;top:370.81px;width:118px;height:16.93px;background:#f6f7f9;border-bottom:1px solid #e4eaf1;border-right:1px solid #e2e9f1;"></div>
<div class="ic C" style="left:246.2px;top:374.91px;"><div class="t" style="left:1.7px;top:0.3px;font-size:8.8px;line-height:8.8px;color:#fff;transform:scaleX(0.85);transform-origin:0 0;">C</div></div>
<div class="t" style="left:257.30px;top:374.75px;font-size:8.9px;line-height:8.9px;font-weight:normal;color:#1a1a1a;transform:scaleX(0.8899);transform-origin:0 0;">age</div>
<div style="left:362px;top:370.81px;width:14px;height:16.93px;background:#fff;border-bottom:1px solid #e2e9f1;border-right:1px solid #e2e9f1;"></div>
<div class="t" style="left:364.70px;top:374.25px;font-size:8.9px;line-height:8.9px;font-weight:normal;color:#1a1a1a;transform:scaleX(0.8539);transform-origin:0 0;">C</div>
<div style="left:376px;top:370.81px;width:71px;height:16.93px;background:#fff;border-bottom:1px solid #e2e9f1;border-right:1px solid #e2e9f1;"></div>
<div class="t" style="left:379.00px;top:372.95px;font-size:8.9px;line-height:8.9px;font-weight:normal;color:#1a1a1a;transform:scaleX(0.8629);transform-origin:0 0;">0.058</div>
<div style="left:379px;top:381.91px;width:17.846153846153847px;height:2.8px;border-radius:1.4px;background:#f00;"></div>
<div style="left:447px;top:370.81px;width:70px;height:16.93px;background:#fff;border-bottom:1px solid #e2e9f1;border-right:1px solid #e2e9f1;"></div>
<div class="t" style="left:450.00px;top:372.95px;font-size:8.9px;line-height:8.9px;font-weight:normal;color:#1a1a1a;transform:scaleX(0.8629);transform-origin:0 0;">0.029</div>
<div style="left:450px;top:381.91px;width:11.113772455089821px;height:2.8px;border-radius:1.4px;background:#f00;"></div>
<div style="left:517px;top:370.81px;width:69px;height:16.93px;background:#fff;border-bottom:1px solid #e2e9f1;border-right:1px solid #e2e9f1;"></div>
<div class="t" style="left:520.00px;top:372.95px;font-size:8.9px;line-height:8.9px;font-weight:normal;color:#1a1a1a;transform:scaleX(0.8629);transform-origin:0 0;">0.020</div>
<div style="left:520px;top:381.91px;width:18.823529411764707px;height:2.8px;border-radius:1.4px;background:#f00;"></div>
<div style="left:244px;top:387.74px;width:118px;height:16.93px;background:#f6f7f9;border-bottom:1px solid #e4eaf1;border-right:1px solid #e2e9f1;"></div>
<div class="ic D" style="left:246.2px;top:391.84000000000003px;"><div class="t" style="left:1.7px;top:0.3px;font-size:8.8px;line-height:8.8px;color:#fff;transform:scaleX(0.85);transform-origin:0 0;">D</div></div>
<div class="t" style="left:257.30px;top:391.68px;font-size:8.9px;line-height:8.9px;font-weight:normal;color:#1a1a1a;transform:scaleX(0.8899);transform-origin:0 0;">gender</div>
<div style="left:362px;top:387.74px;width:14px;height:16.93px;background:#fff;border-bottom:1px solid #e2e9f1;border-right:1px solid #e2e9f1;"></div>
<div class="t" style="left:364.70px;top:391.18px;font-size:8.9px;line-height:8.9px;font-weight:normal;color:#1a1a1a;transform:scaleX(0.8539);transform-origin:0 0;">2</div>
<div style="left:376px;top:387.74px;width:71px;height:16.93px;background:#fff;border-bottom:1px solid #e2e9f1;border-right:1px solid #e2e9f1;"></div>
<div class="t" style="left:379.00px;top:389.88px;font-size:8.9px;line-height:8.9px;font-weight:normal;color:#1a1a1a;transform:scaleX(0.8629);transform-origin:0 0;">0.057</div>
<div style="left:379px;top:398.84000000000003px;width:17.53846153846154px;height:2.8px;border-radius:1.4px;background:#f00;"></div>
<div style="left:447px;top:387.74px;width:70px;height:16.93px;background:#fff;border-bottom:1px solid #e2e9f1;border-right:1px solid #e2e9f1;"></div>
<div class="t" style="left:450.00px;top:389.88px;font-size:8.9px;line-height:8.9px;font-weight:normal;color:#1a1a1a;transform:scaleX(0.8629);transform-origin:0 0;">0.063</div>
<div style="left:450px;top:398.84000000000003px;width:24.143712574850298px;height:2.8px;border-radius:1.4px;background:#f00;"></div>
<div style="left:517px;top:387.74px;width:69px;height:16.93px;background:#fff;border-bottom:1px solid #e2e9f1;border-right:1px solid #e2e9f1;"></div>
<div class="t" style="left:520.00px;top:389.88px;font-size:8.9px;line-height:8.9px;font-weight:normal;color:#1a1a1a;transform:scaleX(0.8629);transform-origin:0 0;">0.019</div>
<div style="left:520px;top:398.84000000000003px;width:17.882352941176467px;height:2.8px;border-radius:1.4px;background:#f00;"></div>
<div style="left:244px;top:404.67px;width:118px;height:16.93px;background:#f6f7f9;border-bottom:1px solid #e4eaf1;border-right:1px solid #e2e9f1;"></div>
<div class="ic D" style="left:246.2px;top:408.77000000000004px;"><div class="t" style="left:1.7px;top:0.3px;font-size:8.8px;line-height:8.8px;color:#fff;transform:scaleX(0.85);transform-origin:0 0;">D</div></div>
<div class="t" style="left:257.30px;top:408.61px;font-size:8.9px;line-height:8.9px;font-weight:normal;color:#1a1a1a;transform:scaleX(0.8899);transform-origin:0 0;">rest ECG</div>
<div style="left:362px;top:404.67px;width:14px;height:16.93px;background:#fff;border-bottom:1px solid #e2e9f1;border-right:1px solid #e2e9f1;"></div>
<div class="t" style="left:364.70px;top:408.11px;font-size:8.9px;line-height:8.9px;font-weight:normal;color:#1a1a1a;transform:scaleX(0.8539);transform-origin:0 0;">3</div>
<div style="left:376px;top:404.67px;width:71px;height:16.93px;background:#fff;border-bottom:1px solid #e2e9f1;border-right:1px solid #e2e9f1;"></div>
<div class="t" style="left:379.00px;top:406.81px;font-size:8.9px;line-height:8.9px;font-weight:normal;color:#1a1a1a;transform:scaleX(0.8629);transform-origin:0 0;">0.024</div>
<div style="left:379px;top:415.77000000000004px;width:7.384615384615385px;height:2.8px;border-radius:1.4px;background:#f00;"></div>
<div style="left:447px;top:404.67px;width:70px;height:16.93px;background:#fff;border-bottom:1px solid #e2e9f1;border-right:1px solid #e2e9f1;"></div>
<div class="t" style="left:450.00px;top:406.81px;font-size:8.9px;line-height:8.9px;font-weight:normal;color:#1a1a1a;transform:scaleX(0.8629);transform-origin:0 0;">0.022</div>
<div style="left:450px;top:415.77000000000004px;width:8.431137724550897px;height:2.8px;border-radius:1.4px;background:#f00;"></div>
<div style="left:517px;top:404.67px;width:69px;height:16.93px;background:#fff;border-bottom:1px solid #e2e9f1;border-right:1px solid #e2e9f1;"></div>
<div class="t" style="left:520.00px;top:406.81px;font-size:8.9px;line-height:8.9px;font-weight:normal;color:#1a1a1a;transform:scaleX(0.8629);transform-origin:0 0;">0.008</div>
<div style="left:520px;top:415.77000000000004px;width:7.529411764705882px;height:2.8px;border-radius:1.4px;background:#f00;"></div>
<div style="left:244px;top:421.6px;width:118px;height:16.93px;background:#f6f7f9;border-bottom:1px solid #e4eaf1;border-right:1px solid #e2e9f1;"></div>
<div class="ic C" style="left:246.2px;top:425.70000000000005px;"><div class="t" style="left:1.7px;top:0.3px;font-size:8.8px;line-height:8.8px;color:#fff;transform:scaleX(0.85);transform-origin:0 0;">C</div></div>
<div class="t" style="left:257.30px;top:425.54px;font-size:8.9px;line-height:8.9px;font-weight:normal;color:#1a1a1a;transform:scaleX(0.8899);transform-origin:0 0;">cholesterol</div>
<div style="left:362px;top:421.6px;width:14px;height:16.93px;background:#fff;border-bottom:1px solid #e2e9f1;border-right:1px solid #e2e9f1;"></div>
<div class="t" style="left:364.70px;top:425.04px;font-size:8.9px;line-height:8.9px;font-weight:normal;color:#1a1a1a;transform:scaleX(0.8539);transform-origin:0 0;">C</div>
<div style="left:376px;top:421.6px;width:71px;height:16.93px;background:#fff;border-bottom:1px solid #e2e9f1;border-right:1px solid #e2e9f1;"></div>
<div class="t" style="left:379.00px;top:423.74px;font-size:8.9px;line-height:8.9px;font-weight:normal;color:#1a1a1a;transform:scaleX(0.8629);transform-origin:0 0;">0.016</div>
<div style="left:379px;top:432.70000000000005px;width:4.923076923076923px;height:2.8px;border-radius:1.4px;background:#f00;"></div>
<div style="left:447px;top:421.6px;width:70px;height:16.93px;background:#fff;border-bottom:1px solid #e2e9f1;border-right:1px solid #e2e9f1;"></div>
<div class="t" style="left:450.00px;top:423.74px;font-size:8.9px;line-height:8.9px;font-weight:normal;color:#1a1a1a;transform:scaleX(0.8629);transform-origin:0 0;">0.008</div>
<div style="left:450px;top:432.70000000000005px;width:3.0658682634730536px;height:2.8px;border-radius:1.4px;background:#f00;"></div>
<div style="left:517px;top:421.6px;width:69px;height:16.93px;background:#fff;border-bottom:1px solid #e2e9f1;border-right:1px solid #e2e9f1;"></div>
<div class="t" style="left:520.00px;top:423.74px;font-size:8.9px;line-height:8.9px;font-weight:normal;color:#1a1a1a;transform:scaleX(0.8629);transform-origin:0 0;">0.006</div>
<div style="left:520px;top:432.70000000000005px;width:5.647058823529411px;height:2.8px;border-radius:1.4px;background:#f00;"></div>
<div style="left:244px;top:438.53px;width:118px;height:16.93px;background:#f6f7f9;border-bottom:1px solid #e4eaf1;border-right:1px solid #e2e9f1;"></div>
<div class="ic C" style="left:246.2px;top:442.63px;"><div class="t" style="left:1.7px;top:0.3px;font-size:8.8px;line-height:8.8px;color:#fff;transform:scaleX(0.85);transform-origin:0 0;">C</div></div>
<div class="t" style="left:257.30px;top:442.47px;font-size:8.9px;line-height:8.9px;font-weight:normal;color:#1a1a1a;transform:scaleX(0.8899);transform-origin:0 0;">rest SBP</div>
<div style="left:362px;top:438.53px;width:14px;height:16.93px;background:#fff;border-bottom:1px solid #e2e9f1;border-right:1px solid #e2e9f1;"></div>
<div class="t" style="left:364.70px;top:441.97px;font-size:8.9px;line-height:8.9px;font-weight:normal;color:#1a1a1a;transform:scaleX(0.8539);transform-origin:0 0;">C</div>
<div style="left:376px;top:438.53px;width:71px;height:16.93px;background:#fff;border-bottom:1px solid #e2e9f1;border-right:1px solid #e2e9f1;"></div>
<div class="t" style="left:379.00px;top:440.67px;font-size:8.9px;line-height:8.9px;font-weight:normal;color:#1a1a1a;transform:scaleX(0.8629);transform-origin:0 0;">0.015</div>
<div style="left:379px;top:449.63px;width:4.615384615384616px;height:2.8px;border-radius:1.4px;background:#f00;"></div>
<div style="left:447px;top:438.53px;width:70px;height:16.93px;background:#fff;border-bottom:1px solid #e2e9f1;border-right:1px solid #e2e9f1;"></div>
<div class="t" style="left:450.00px;top:440.67px;font-size:8.9px;line-height:8.9px;font-weight:normal;color:#1a1a1a;transform:scaleX(0.8629);transform-origin:0 0;">0.008</div>
<div style="left:450px;top:449.63px;width:3.0658682634730536px;height:2.8px;border-radius:1.4px;background:#f00;"></div>
<div style="left:517px;top:438.53px;width:69px;height:16.93px;background:#fff;border-bottom:1px solid #e2e9f1;border-right:1px solid #e2e9f1;"></div>
<div class="t" style="left:520.00px;top:440.67px;font-size:8.9px;line-height:8.9px;font-weight:normal;color:#1a1a1a;transform:scaleX(0.8629);transform-origin:0 0;">0.005</div>
<div style="left:520px;top:449.63px;width:4.705882352941177px;height:2.8px;border-radius:1.4px;background:#f00;"></div>
<div style="left:244px;top:455.46000000000004px;width:118px;height:16.93px;background:#f6f7f9;border-bottom:1px solid #e4eaf1;border-right:1px solid #e2e9f1;"></div>
<div class="ic D" style="left:246.2px;top:459.56000000000006px;"><div class="t" style="left:1.7px;top:0.3px;font-size:8.8px;line-height:8.8px;color:#fff;transform:scaleX(0.85);transform-origin:0 0;">D</div></div>
<div class="t" style="left:257.30px;top:459.40px;font-size:8.9px;line-height:8.9px;font-weight:normal;color:#1a1a1a;transform:scaleX(0.9393);transform-origin:0 0;">fasting blood sugar &gt; 120</div>
<div style="left:362px;top:455.46000000000004px;width:14px;height:16.93px;background:#fff;border-bottom:1px solid #e2e9f1;border-right:1px solid #e2e9f1;"></div>
<div class="t" style="left:364.70px;top:458.90px;font-size:8.9px;line-height:8.9px;font-weight:normal;color:#1a1a1a;transform:scaleX(0.8539);transform-origin:0 0;">2</div>
<div style="left:376px;top:455.46000000000004px;width:71px;height:16.93px;background:#fff;border-bottom:1px solid #e2e9f1;border-right:1px solid #e2e9f1;"></div>
<div class="t" style="left:379.00px;top:457.60px;font-size:8.9px;line-height:8.9px;font-weight:normal;color:#1a1a1a;transform:scaleX(0.8629);transform-origin:0 0;">0.000</div>
<div style="left:379px;top:466.56000000000006px;width:1.3px;height:2.8px;border-radius:1.4px;background:#f00;"></div>
<div style="left:447px;top:455.46000000000004px;width:70px;height:16.93px;background:#fff;border-bottom:1px solid #e2e9f1;border-right:1px solid #e2e9f1;"></div>
<div class="t" style="left:450.00px;top:457.60px;font-size:8.9px;line-height:8.9px;font-weight:normal;color:#1a1a1a;transform:scaleX(0.8629);transform-origin:0 0;">0.001</div>
<div style="left:450px;top:466.56000000000006px;width:1.3px;height:2.8px;border-radius:1.4px;background:#f00;"></div>
<div style="left:517px;top:455.46000000000004px;width:69px;height:16.93px;background:#fff;border-bottom:1px solid #e2e9f1;border-right:1px solid #e2e9f1;"></div>
<div class="t" style="left:520.00px;top:457.60px;font-size:8.9px;line-height:8.9px;font-weight:normal;color:#1a1a1a;transform:scaleX(0.8629);transform-origin:0 0;">0.000</div>
<div style="left:520px;top:466.56000000000006px;width:1.3px;height:2.8px;border-radius:1.4px;background:#f00;"></div>
<div style="left:244px;top:477px;width:344px;height:11px;background:#f0f0f0;"></div>
<svg style="position:absolute;left:247px;top:479.5px" width="5" height="7" viewBox="0 0 5 7"><path d="M4 1 L1.5 3.5 L4 6" stroke="#444" stroke-width="1.4" fill="none"/></svg>
<div style="left:256px;top:477px;width:118.7px;height:11px;background:#cdcdcd;"></div>
<svg style="position:absolute;left:579px;top:479.5px" width="5" height="7" viewBox="0 0 5 7"><path d="M1 1 L3.5 3.5 L1 6" stroke="#444" stroke-width="1.4" fill="none"/></svg>
</body></html>
